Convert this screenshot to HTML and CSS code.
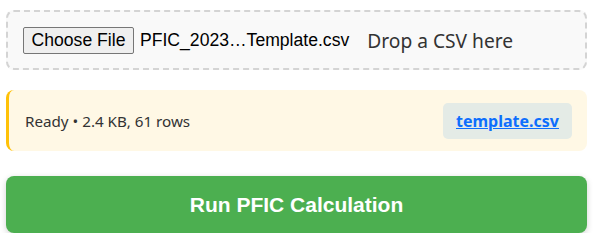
FILE: index.html
```html
<!DOCTYPE html>
<html>
<head>
<meta charset="utf-8">
<link rel="stylesheet" href="styles.css">
</head>
<body>
<div class="wrap">
  <div class="dropzone">
    <div class="file-input">
      <button class="choose" type="button">Choose File</button>
      <span class="file-name">PFIC_2023…Template.csv</span>
    </div>
    <span class="drop-hint">Drop a CSV here</span>
  </div>
  <div class="status">
    <span class="status-text">Ready • 2.4 KB, 61 rows</span>
    <a class="template-link" href="#">template.csv</a>
  </div>
  <button class="run" type="button">Run PFIC Calculation</button>
</div>
</body>
</html>
```

FILE: styles.css
```css
html, body {
  margin: 0;
  padding: 0;
  background: #ffffff;
}
body {
  font-family: "Noto Sans", "Open Sans", sans-serif;
}
.wrap {
  margin: 10px 11px 0 6px;
  display: flex;
  flex-direction: column;
}
.dropzone {
  box-sizing: border-box;
  height: 60px;
  border: 2px dashed #d4d4d4;
  border-radius: 8px;
  background: #f9f9f9;
  display: flex;
  align-items: center;
  padding: 0 15px;
  gap: 18px;
}
.file-input {
  display: flex;
  align-items: center;
  gap: 6px;
  font-family: "Liberation Sans", Arial, sans-serif;
  font-size: 17.6px;
  color: #000;
}
.choose {
  box-sizing: border-box;
  width: 111px;
  height: 27px;
  font-family: "Liberation Sans", Arial, sans-serif;
  font-size: 17.6px;
  color: #000;
  background: #efefef;
  border: 1px solid #767676;
  border-radius: 2px;
  padding: 0;
}
.drop-hint {
  font-size: 19.2px;
  color: #333;
}
.status {
  box-sizing: border-box;
  margin-top: 20px;
  height: 61px;
  background: #fff8e5;
  border-left: 3px solid #ffc107;
  border-radius: 8px;
  display: flex;
  align-items: center;
  justify-content: space-between;
  padding: 0 15px 0 16px;
}
.status-text {
  font-size: 15.2px;
  color: #333;
}
.template-link {
  box-sizing: border-box;
  width: 129px;
  height: 36px;
  display: flex;
  align-items: center;
  justify-content: center;
  background: #e4ebe6;
  border-radius: 5px;
  color: #0d6efd;
  font-weight: bold;
  font-size: 16px;
  text-decoration: underline;
}
.run {
  margin-top: 25px;
  height: 57px;
  border: none;
  border-radius: 8px;
  background: #4caf50;
  color: #fff;
  font-family: "Liberation Sans", Arial, sans-serif;
  font-weight: bold;
  font-size: 21px;
  box-shadow: 0 2px 6px rgba(0,0,0,0.18);
}
```
